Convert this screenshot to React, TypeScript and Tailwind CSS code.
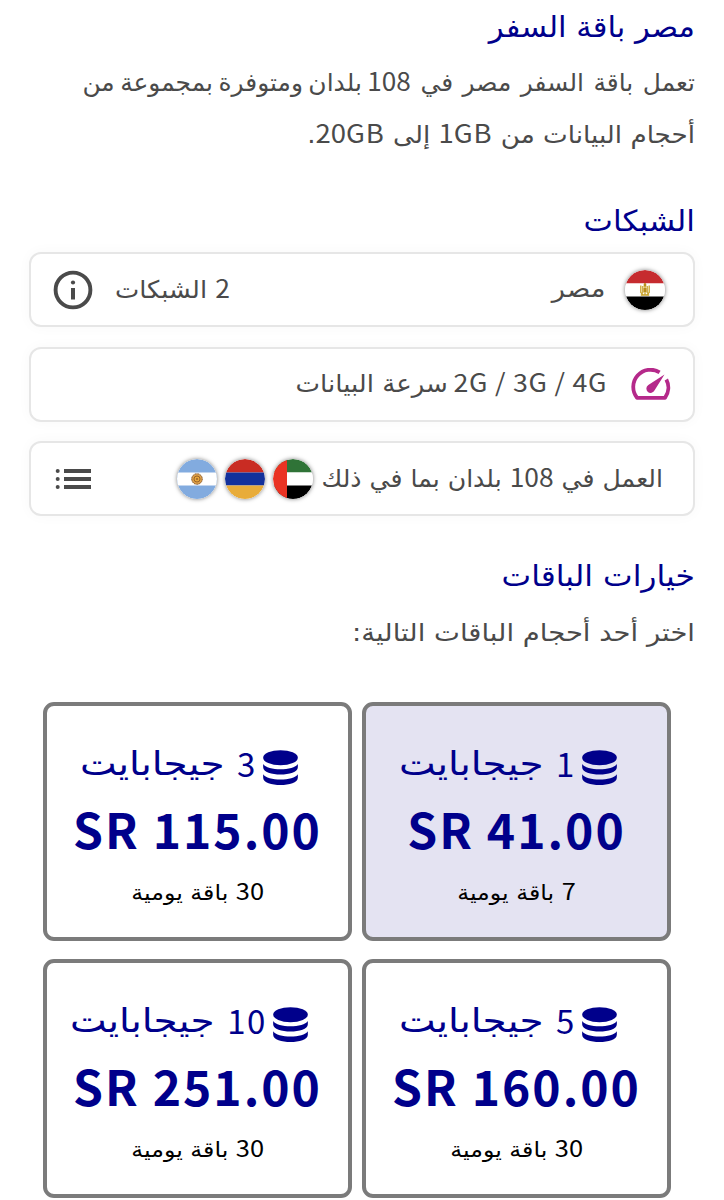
import type { ReactNode } from "react";

function L({ children, className = "" }: { children: ReactNode; className?: string }) {
  return <span className={`font-['Noto_Sans_CJK_SC',sans-serif] ${className}`}>{children}</span>;
}

function Flag({ children, id }: { children: ReactNode; id: string }) {
  return (
    <svg viewBox="0 0 40 40" className="size-10 shrink-0 rounded-full shadow-[0_0_4px_rgba(0,0,0,0.5)]">
      <clipPath id={id}>
        <circle cx="20" cy="20" r="20" />
      </clipPath>
      <g clipPath={`url(#${id})`}>{children}</g>
    </svg>
  );
}

function Egypt() {
  return (
    <Flag id="eg">
      <path fill="#c62b2f" d="M0 0h40v13.5H0z" />
      <path fill="#fff" d="M0 13.5h40v13H0z" />
      <path fill="#000" d="M0 26.500h40V40H0z" />
      <g fill="none" stroke="#c9a227" strokeWidth="1.300">
        <path d="M15.800 15.500v7l2 2M24.200 15.500v7l-2 2M17.800 16v7M22.200 16v7M20 14v11M15.800 25h8.400" />
      </g>
      <path fill="#b98d1d" d="M18.700 14.500c0-2 2.600-2 2.600 0v2h-2.600zM18.500 18h3v4h-3z" />
    </Flag>
  );
}

function Emirates() {
  return (
    <Flag id="ae">
      <path fill="#2f7337" d="M0 0h40v13.500H0z" />
      <path fill="#fff" d="M0 13.500h40v13H0z" />
      <path fill="#000" d="M0 26.500h40V40H0z" />
      <path fill="#ea3323" d="M0 0h14v40H0z" />
    </Flag>
  );
}

function Armenia() {
  return (
    <Flag id="am">
      <path fill="#c92c23" d="M0 0h40v13.500H0z" />
      <path fill="#13319c" d="M0 13.500h40v13H0z" />
      <path fill="#e8ac3a" d="M0 26.500h40V40H0z" />
    </Flag>
  );
}

function Argentina() {
  return (
    <Flag id="ar">
      <path fill="#82abdf" d="M0 0h40v40H0z" />
      <path fill="#fff" d="M0 13.500h40v13H0z" />
      <circle cx="20" cy="20" r="5.300" fill="#dda04a" stroke="#7a4a20" strokeWidth="1" strokeDasharray="1.200 0.500" />
      <circle cx="20" cy="20" r="3" fill="#e7a63c" stroke="#8a5524" strokeWidth="0.800" />
      <circle cx="20" cy="20" r="1" fill="#9a6228" />
    </Flag>
  );
}

function InfoIcon() {
  return (
    <svg viewBox="0 0 40 40" className="size-10">
      <circle cx="20" cy="20" r="17.400" fill="none" stroke="#4a4a4a" strokeWidth="3.900" />
      <circle cx="20" cy="12.500" r="2.100" fill="#4a4a4a" />
      <path fill="#4a4a4a" d="M18 18h4v11.500h-4z" />
    </svg>
  );
}

function GaugeIcon() {
  return (
    <svg viewBox="0 0 40 32" className="h-8 w-10">
      <path
        d="M28.600 4.300A17.300 17.300 0 0 0 6 29.800H34A17.300 17.300 0 0 0 35.300 11.500"
        fill="none"
        stroke="#b5298a"
        strokeWidth="3.800"
        strokeLinejoin="round"
      />
      <path fill="#b5298a" d="M33.500 6.500L23.600 22.300A4.300 4.300 0 1 1 17.300 17Z" />
    </svg>
  );
}

function ListIcon() {
  return (
    <svg viewBox="0 0 36 22" className="h-[22px] w-9" fill="#4a4a4a">
      <circle cx="2.700" cy="2.900" r="2" />
      <circle cx="2.700" cy="10.900" r="2" />
      <circle cx="2.700" cy="18.900" r="2" />
      <path d="M9 .9h27v4h-27zM9 8.900h27v4h-27zM9 16.900h27v4h-27z" />
    </svg>
  );
}

function StackIcon() {
  return (
    <svg viewBox="0 0 104 105" className="size-[35px] shrink-0" fill="#00008b">
      <ellipse cx="52" cy="23" rx="52" ry="22.500" />
      <path d="M0 42C12 63 92 63 104 42V52C104 81 0 81 0 52Z" />
      <path d="M0 73C12 94 92 94 104 73V83C104 112 0 112 0 83Z" />
    </svg>
  );
}

function Row({ children }: { children: ReactNode }) {
  return (
    <div className="flex h-[75px] items-center rounded-[12px] border-2 border-[#e6e6e6] bg-white shadow-[0_0_14px_rgba(0,0,0,0.03)]">
      {children}
    </div>
  );
}

function Plan({ size, price, days, active = false }: { size: string; price: string; days: string; active?: boolean }) {
  return (
    <div
      className={`flex h-[239px] flex-col items-center rounded-[11px] border-4 border-[#7b7b7b] pt-[36px] ${active ? "bg-[#e4e3f2]" : "bg-white"}`}
    >
      <div className="flex h-[50px] items-center pr-[17px] text-[33px] leading-[50px] text-[#00008b]">
        <StackIcon />
        <span className="-mt-1.5 mr-[6px]">
          <L className="tracking-[1.5px]">{size}</L>
        </span>
        <span className="-mt-1.5 mr-[13px] w-[144px] whitespace-nowrap">
          <span className="inline-block origin-right scale-x-[1.18]">جيجابايت</span>
        </span>
      </div>
      <div dir="ltr" className="mt-[6px] h-[60px] whitespace-nowrap font-bold text-[48px] leading-[60px] tracking-[2px] text-[#00008b]">
        <L>SR {price}</L>
      </div>
      <div className="mt-3 h-10 scale-x-[1.13] whitespace-nowrap text-[21px] leading-[40px] text-black">
        <L className="text-[22.5px] tracking-[0.8px]">{days}</L> باقة يومية
      </div>
    </div>
  );
}

export default function App() {
  return (
    <div
      dir="rtl"
      className="h-[1200px] w-[724px] overflow-hidden bg-white pr-[29px] pl-[29px] pt-px font-['DejaVu_Sans',sans-serif] text-[#4a4a4a]"
    >
      <h2 className="h-[52px] origin-right scale-x-[1.058] text-[29px] leading-[52px] text-[#00008b]">مصر باقة السفر</h2>
      <p className="text-[24.3px] leading-[54px]">
        <span className="block h-[52px] origin-right scale-x-[1.025] whitespace-nowrap">
          <span className="[word-spacing:1.6px]">تعمل باقة السفر مصر في </span>
          <L className="text-[25.5px] tracking-[1.8px]">108</L>
          <span className="[word-spacing:-2.4px]"> بلدان ومتوفرة بمجموعة من</span>
        </span>
        <span className="block h-[52px] origin-right scale-x-[1.078] whitespace-nowrap">
          أحجام البيانات من <L className="text-[25.5px] tracking-[0.8px]">1GB</L> إلى <L className="text-[25.5px] tracking-[0.8px]">20GB</L>.
        </span>
      </p>
      <h2 className="mt-[38px] h-[52px] origin-right scale-x-[1.075] text-[29px] leading-[52px] text-[#00008b]">الشبكات</h2>
      <div className="mt-[5px] flex flex-col gap-[19.500px] text-[24.3px]">
        <Row>
          <div className="flex w-full items-center pr-7 pl-[22px]">
            <Egypt />
            <span className="mr-5 origin-right scale-x-[1.13]">مصر</span>
            <span className="-mt-0.5 mr-auto origin-left scale-x-[1.06]">
              <L className="text-[25px]">2</L> الشبكات
            </span>
            <span className="mr-[22px]"><InfoIcon /></span>
          </div>
        </Row>
        <Row>
          <div className="flex w-full items-center pr-[22px]">
            <GaugeIcon />
            <span className="-mt-0.5 mr-6 origin-right scale-x-[1.07] whitespace-nowrap">
              <bdi dir="ltr"><L className="text-[25px] tracking-[0.7px]">2G / 3G / 4G</L></bdi>
              <span className="[word-spacing:-2.5px]">{" "}</span>
              سرعة البيانات
            </span>
          </div>
        </Row>
        <Row>
          <div className="flex w-full items-center pr-[30px] pl-6">
            <span className="-mt-0.5 w-[342px] whitespace-nowrap">
              <span className="inline-block origin-right scale-x-[1.035]">
                العمل في <L className="text-[25.5px] tracking-[1.5px]">108</L> بلدان بما في ذلك
              </span>
            </span>
            <div className="mr-2 flex gap-2">
              <Emirates />
              <Armenia />
              <Argentina />
            </div>
            <span className="mr-auto"><ListIcon /></span>
          </div>
        </Row>
      </div>
      <h2 className="mt-[34px] h-[52px] origin-right scale-x-[1.083] text-[29px] leading-[52px] text-[#00008b]">خيارات الباقات</h2>
      <p className="mt-1 h-[52px] origin-right scale-x-[1.13] text-[24.3px] leading-[54px]">اختر أحد أحجام الباقات التالية:</p>
      <div className="mt-[44px] mr-6 grid w-[628px] grid-cols-2 gap-x-[10px] gap-y-[18px]">
        <Plan size="1" price="41.00" days="7" active />
        <Plan size="3" price="115.00" days="30" />
        <Plan size="5" price="160.00" days="30" />
        <Plan size="10" price="251.00" days="30" />
      </div>
    </div>
  );
}
